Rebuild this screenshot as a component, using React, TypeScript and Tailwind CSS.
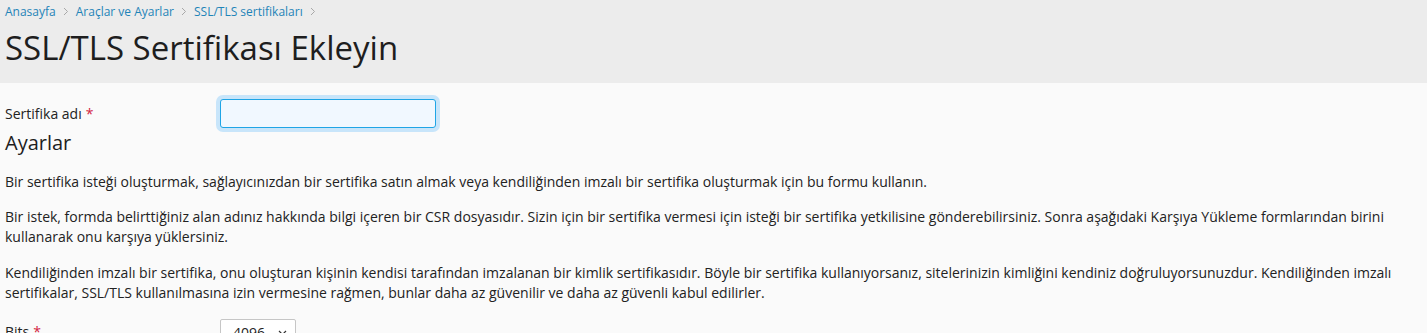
const FONT = { fontFamily: '"Open Sans", "Noto Sans", sans-serif' }

function Chevron() {
  return (
    <svg width="6" height="9" viewBox="0 0 6 9" className="mx-[7px]">
      <path d="M1 1l3.5 3.5L1 8" fill="none" stroke="#a8a8a8" strokeWidth="1" />
    </svg>
  )
}

function Required() {
  return <span className="text-[#d3243f] ml-[4px]">*</span>
}

export default function App() {
  return (
    <div style={FONT} className="min-h-screen bg-[#fafafa] text-[#222]">
      <div className="bg-[#ececec] px-[5px] pt-[3px] h-[83px]">
        <nav className="flex items-center text-[12px] leading-[17px] text-[#1f84b8]">
          <a href="#">Anasayfa</a>
          <Chevron />
          <a href="#">Araçlar ve Ayarlar</a>
          <Chevron />
          <a href="#">SSL/TLS sertifikaları</a>
          <Chevron />
        </nav>
        <h1 className="text-[33px] leading-[40px] mt-[8px] text-[#1e1e1e]">SSL/TLS Sertifikası Ekleyin</h1>
      </div>

      <div className="px-[5px] text-[14px]">
        <div className="flex items-center mt-[16px]">
          <label className="w-[215px] leading-[20px]">
            Sertifika adı<Required />
          </label>
          <input
            type="text"
            className="w-[216px] h-[29px] border border-[#1fa5e6] bg-[#f1f8ff] rounded-[3px] outline-none ring-[4px] ring-[#c8e5fa]"
          />
        </div>

        <h2 className="text-[20px] leading-[26px] mt-[2px] mb-[16px] text-[#1e1e1e]">Ayarlar</h2>

        <p className="leading-[20px] mb-[15px]">
          Bir sertifika isteği oluşturmak, sağlayıcınızdan bir sertifika satın almak veya kendiliğinden imzalı bir sertifika oluşturmak için bu formu kullanın.
        </p>
        <p className="leading-[20px] mb-[16px]">
          Bir istek, formda belirttiğiniz alan adınız hakkında bilgi içeren bir CSR dosyasıdır. Sizin için bir sertifika vermesi için isteği bir sertifika yetkilisine gönderebilirsiniz. Sonra aşağıdaki Karşıya Yükleme formlarından birini kullanarak onu karşıya yüklersiniz.
        </p>
        <p className="leading-[20px] mb-[16px]">
          Kendiliğinden imzalı bir sertifika, onu oluşturan kişinin kendisi tarafından imzalanan bir kimlik sertifikasıdır. Böyle bir sertifika kullanıyorsanız, sitelerinizin kimliğini kendiniz doğruluyorsunuzdur. Kendiliğinden imzalı sertifikalar, SSL/TLS kullanılmasına izin vermesine rağmen, bunlar daha az güvenilir ve daha az güvenli kabul edilirler.
        </p>

        <div className="flex items-start">
          <label className="w-[215px] leading-[20px] pt-[3px]">
            Bits<Required />
          </label>
          <div className="w-[76px] h-[28px] border border-[#c6c6c6] rounded-[2px] bg-white flex items-center pl-[12px] pr-[8px]">
            <span className="leading-[20px]">4096</span>
            <svg width="9" height="6" viewBox="0 0 9 6" className="ml-auto">
              <path d="M1 1l3.5 3.5L8 1" fill="none" stroke="#333" strokeWidth="1.2" />
            </svg>
          </div>
        </div>
      </div>
    </div>
  )
}
